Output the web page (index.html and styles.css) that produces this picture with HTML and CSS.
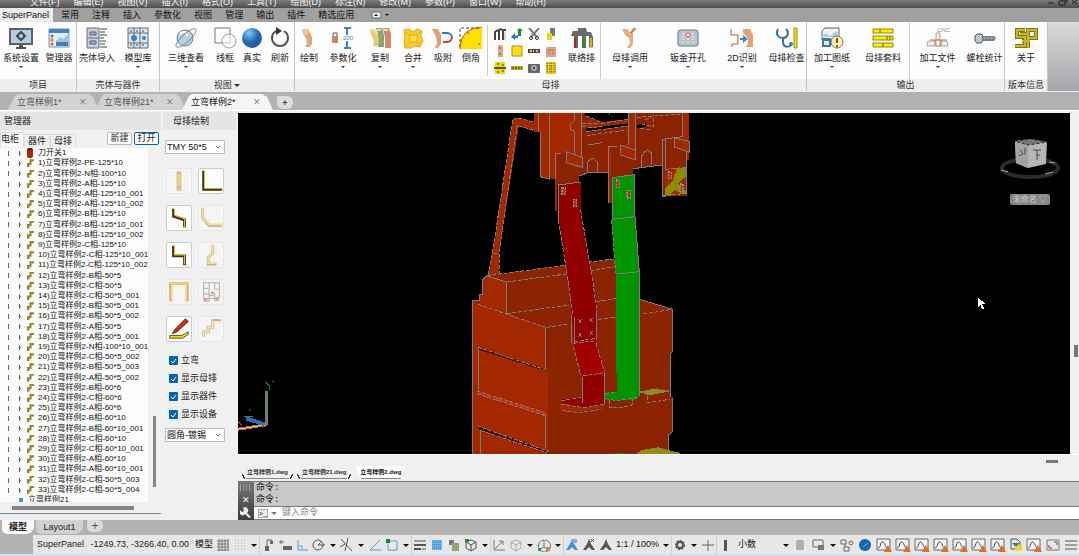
FILE: index.html
```html
<!DOCTYPE html>
<html lang="zh-CN">
<head>
  <meta charset="UTF-8">
  <meta name="viewport" content="width=device-width, initial-scale=1.0">
  <title>SuperPanel - 立弯样例2</title>
  <link rel="stylesheet" href="styles.css">
</head>
<body>
  <!-- shared icons -->
  <svg class="defs" aria-hidden="true">
    <symbol id="i-chart" viewBox="0 0 16 14">
      <path d="M1 1h13v11H1z" fill="#f4f4f4" stroke="#666" stroke-width="1"/>
      <path d="M2 10C5 10 4 4 6.500 4S9 9 11 10" fill="none" stroke="#444"/>
      <path d="M12 7l4 7H8z" fill="#e07020"/>
    </symbol>
    <symbol id="i-person" viewBox="0 0 14 14">
      <path d="M7 1l2 5 4 6h-3L7 9l-3 3H1l4-6z" fill="currentColor"/>
    </symbol>
    <symbol id="i-bar" viewBox="0 0 22 22">
      <path d="M4 2l6 0 2 4 2 4v7l-2 3H7l2-4-1-5-3-4z" fill="#e2a679"/>
      <path d="M4 2h6v5l-4 2z" fill="#edc29c"/>
    </symbol>
  </svg>

  <nav class="menubar">
    <div class="menu-items">
      <a href="#">文件(F)</a><a href="#">编辑(E)</a><a href="#">视图(V)</a><a href="#">插入(I)</a><a href="#">格式(O)</a><a href="#">工具(T)</a><a href="#">绘图(D)</a><a href="#">标注(N)</a><a href="#">修改(M)</a><a href="#">参数(P)</a><a href="#">窗口(W)</a><a href="#">帮助(H)</a>
    </div>
    <svg class="window-buttons" viewBox="0 0 32 8"><path d="M1 3h6M12 1h6v4h-6zM14 0h6v3M25 0l5 4M30 0l-5 4" fill="none" stroke="#222"/></svg>
  </nav>

  <nav class="ribbon-tabs">
    <a href="#" class="active">SuperPanel</a><a href="#">常用</a><a href="#">注释</a><a href="#">插入</a><a href="#">参数化</a><a href="#">视图</a><a href="#">管理</a><a href="#">输出</a><a href="#">插件</a><a href="#">精选应用</a>
    <svg class="ribbon-toggle" viewBox="0 0 20 8"><rect x="1" y="1" width="9" height="6" rx="1" fill="#eee" stroke="#666"/><path d="M3 5l2-2 2 2zM14 3h4l-2 2z" fill="#111"/></svg>
  </nav>

  <section class="ribbon">
    <div class="group">
      <div class="tools tools-project">
        <button class="tool"><svg viewBox="0 0 24 22"><path d="M1 2h22v15H1z" fill="#b9cde0" stroke="#5c6268" stroke-width="2"/><circle cx="12" cy="9" r="3" fill="none" stroke="#444b52" stroke-width="2"/><path d="M12 4v2M12 12v2M7 9h2M15 9h2" stroke="#444b52" stroke-width="2"/><path d="M10 18h4v2h3v2H7v-2h3z" fill="#555"/></svg>系统设置<i class="caret"></i></button>
        <button class="tool"><svg viewBox="0 0 22 22"><path d="M1 2h20v18H1z" fill="#e4eff8" stroke="#7198b8"/><path d="M1 2h20v4H1z" fill="#4a83b4"/><path d="M8 14l4-4 3 2 5-5v8H8z" fill="#9fc3e2"/><path d="M8 15h12v4H8z" fill="#3f80ba"/><circle cx="4" cy="9" r="1.500" fill="#3d7fb9"/><circle cx="4" cy="13" r="2" fill="#ee9b35"/><circle cx="4" cy="17" r="1.500" fill="#dc693c"/></svg>管理器</button>
      </div>
      <div class="caption">项目</div>
    </div>

    <div class="group">
      <div class="tools tools-parts">
        <button class="tool"><svg viewBox="0 0 22 22"><path d="M1 1h12v20H1z" fill="#c4d0dc" stroke="#69737e"/><path d="M1 11h12" stroke="#69737e"/><path d="M4 5h6v3H4zM4 14h6v3H4z" fill="#a2b1bf" stroke="#5c6570"/><path d="M14 2h7M14 5h5M14 8h7M14 11h4M14 14h6M14 17h5M14 20h7" stroke="#3d4e43" stroke-width="1"/></svg>壳体导入</button>
        <button class="tool"><svg viewBox="0 0 22 22"><path d="M1 1h20v20H1zM1 6h20M1 16h20M7 1v20M13 1v20" fill="#dbe6ef" stroke="#626b75"/><circle cx="7" cy="11" r="3" fill="#3983bf"/><circle cx="17" cy="11" r="2" fill="#3983bf"/><path d="M4 3v2M10 3v2M16 3v2M4 17v2M10 17v2M16 17v2" stroke="#3e4852"/></svg>模型库<i class="caret"></i></button>
      </div>
      <div class="caption">壳体与器件</div>
    </div>

    <div class="group">
      <div class="tools tools-view">
        <button class="tool"><svg viewBox="0 0 24 22"><circle cx="11" cy="11" r="8" fill="#bdd0e2" stroke="#77848f"/><path d="M6 7c4-4 7-2 7 2" stroke="#fff" stroke-width="2" fill="none"/><ellipse cx="12" cy="11" rx="13" ry="4" transform="rotate(-42 12 11)" fill="none" stroke="#8a9299" stroke-width="1"/></svg>三维查看<i class="caret"></i></button>
        <button class="tool"><svg viewBox="0 0 24 22"><path d="M2 1h15v15H2z" fill="none" stroke="#777" stroke-width="1"/><circle cx="16" cy="14" r="7" fill="#fff" fill-opacity=".6" stroke="#999" stroke-width="1"/></svg>线框</button>
        <button class="tool"><svg viewBox="0 0 22 22"><defs><radialGradient id="ball" cx=".35" cy=".25"><stop offset="0" stop-color="#8bc5f1"/><stop offset=".7" stop-color="#367fc8"/><stop offset="1" stop-color="#25629f"/></radialGradient></defs><circle cx="11" cy="11" r="10" fill="url(#ball)"/></svg>真实</button>
        <button class="tool"><svg viewBox="0 0 22 22"><path d="M7 4a8 8 0 1 0 8 0" fill="none" stroke="#505050" stroke-width="2"/><path d="M7 0l6 4-6 4z" fill="#333"/></svg>刷新</button>
      </div>
      <div class="caption">视图 <i class="caret big"></i></div>
    </div>

    <div class="group">
      <div class="tools tools-busbar">
        <button class="tool"><svg viewBox="0 0 22 22"><use href="#i-bar"/></svg>绘制</button>
        <button class="tool"><svg viewBox="0 0 22 22"><path d="M0 9h6v7H0z" fill="#c68a62"/><path d="M1 9V6h4v3" fill="none" stroke="#555" stroke-width="1"/><path d="M12 1h7M12 21h7M15 1v20" stroke="#3a83c4" stroke-width="2"/><path d="M10 8h12v6H10z" fill="#fff"/><text x="11" y="13" class="icon-text">200</text></svg>参数化<i class="caret"></i></button>
        <button class="tool"><svg viewBox="0 0 22 22"><path d="M0 2h6l4 8v9H4l1-5z" fill="#e9c877"/><path d="M7 1h6l2 7v12H9l1-8z" fill="#87a474"/><path d="M14 1h6l2 6v14h-6V11z" fill="#d9866f"/><path d="M1 3l5 0 2 4M8 3l4 0M15 3l4 0" stroke="#f2e0bd" stroke-width="2" fill="none"/></svg>复制<i class="caret"></i></button>
        <button class="tool"><svg viewBox="0 0 22 22"><path d="M2 3l5-1 4 3 4-3 5 2-1 5 2 5-3 6-5-1-4 2-6 0-1-6 1-5z" fill="#f7d01d" stroke="#dfa04d"/><path d="M8 8h7v7H8zM4 5l4 3M18 5l-3 3M4 18l4-3M18 18l-3-3" fill="#ffe346" stroke="#e9a737"/></svg>合并<i class="caret"></i></button>
        <button class="tool"><svg viewBox="0 0 22 22"><path d="M0 2h6l3 6v9l-3 4H3l2-5-1-6z" fill="#dfa277"/><path d="M10 6h5a5 5 0 0 1 5 5" fill="none" stroke="#2f77b8" stroke-width="2"/><path d="M20 10a5 5 0 0 1-5 5h-4" fill="none" stroke="#d53e2e" stroke-width="2"/></svg>吸附</button>
        <button class="tool"><svg viewBox="0 0 22 22"><path d="M0 22C0 8 8 1 22 0v22z" fill="#ffdf00"/><path d="M0 20V1h21" fill="none" stroke="#444" stroke-dasharray="3 2"/><path d="M0 22C0 8 8 1 22 0M7 4l2 3M19 16v2" fill="none" stroke="#c63e2b"/></svg>倒角</button>
        <div class="mini-grid">
          <button aria-label="母排组"><svg viewBox="0 0 12 12"><path d="M1 12V4l3-2M5 12V2l3-1M9 12V2h3" fill="none" stroke="#444" stroke-width="2"/><path d="M11 4v8" stroke="#cdbd68"/></svg></button>
          <button aria-label="旋转"><svg viewBox="0 0 12 12"><path d="M0 9l4-4v3l3-1v3l-3 0v2z" fill="#2376bd"/><path d="M6 2l3-2 3 3-2 0v5H7V3z" fill="#179532"/></svg></button>
          <button aria-label="剪切"><svg viewBox="0 0 12 12"><path d="M1 0l8 9M11 0L3 9" stroke="#777" stroke-width="2"/><circle cx="3" cy="10" r="1.500" fill="none" stroke="#333"/><circle cx="9" cy="10" r="1.500" fill="none" stroke="#333"/></svg></button>
          <button aria-label="拼接"><svg viewBox="0 0 12 12"><path d="M5 0h5v8H5z" fill="#777"/><path d="M2 5h5v7H2z" fill="#e8d714"/></svg></button>
          <button aria-label="打孔"><svg viewBox="0 0 12 12"><path d="M4 0h5v12H4z" fill="#e3aa80"/><path d="M5 3h2M5 9h2" stroke="#744" stroke-width="1"/></svg></button>
          <button aria-label="铜板"><svg viewBox="0 0 12 12"><path d="M1 1h10v10H1z" fill="#ffdd13" stroke="#a69012"/></svg></button>
          <button aria-label="连接"><svg viewBox="0 0 12 12"><path d="M0 4h12v4H0z" fill="#494949"/><path d="M2 5h2v2H2zM8 5h2v2H8zM5 5h1v2H5z" fill="#ffc72e"/></svg></button>
          <button aria-label="折弯"><svg viewBox="0 0 12 12"><path d="M2 2h9v10H1V4z" fill="#dba180"/><path d="M3 5h6M3 8h2M7 8h2" stroke="#b56f50"/></svg></button>
          <button aria-label="四孔"><svg viewBox="0 0 12 12"><path d="M1 0h10v5H1zM1 7h10v5H1z" fill="#f2d800"/><path d="M0 6h12" stroke="#555" stroke-width="2"/><path d="M3 2h2M8 3h2M3 10h2M8 9h2" stroke="#333"/></svg></button>
          <button aria-label="直排"><svg viewBox="0 0 12 12"><path d="M0 4h12v4H0z" fill="#bba617"/><path d="M1 6h10" stroke="#443d0b" stroke-dasharray="2 1"/></svg></button>
          <button aria-label="测量"><svg viewBox="0 0 12 12"><rect y="2" width="12" height="9" rx="1" fill="#666"/><circle cx="6" cy="6" r="3" fill="#aaa"/><circle cx="6" cy="6" r="1" fill="#222"/></svg></button>
          <button aria-label="孔阵"><svg viewBox="0 0 12 12"><path d="M1 0h10v12H1z" fill="#e7d221"/><path d="M2 1h8M2 4h8M2 7h8M2 10h8M2 1v10M6 1v10M10 1v10" stroke="#706400" stroke-dasharray="1 1"/></svg></button>
        </div>
        <button class="tool"><svg viewBox="0 0 22 22"><path d="M7 1h8l1 4 4 0 2 5v10h-4V9h-3v12h-4V9H7v12H3V9H0l2-5h5z" fill="#696969"/><path d="M4 11v10" stroke="#b32520" stroke-width="2"/><path d="M12 11v10" stroke="#1c902d" stroke-width="2"/><path d="M20 11v10" stroke="#d1b420" stroke-width="2"/></svg>联络排</button>
        <button class="tool"><svg viewBox="0 0 22 22"><path d="M3 2l5 0 3 3 3-4 4 0-4 5 0 11-3 4H8l3-5-1-5-4-3z" fill="#e6ad83"/><path d="M12 6l4-5" stroke="#975b33" fill="none"/></svg>母排调用<i class="caret"></i></button>
        <button class="tool"><svg viewBox="0 0 22 22"><rect x="1" y="3" width="20" height="16" rx="2" fill="#bbc6d0" stroke="#69747d"/><path d="M5 8h2M15 8h2M5 14h2M10 14h2M15 14h2" stroke="#fff" stroke-width="3"/><path d="M5 8h2M15 8h2M5 14h2M10 14h2M15 14h2" stroke="#7c8790"/><circle cx="11" cy="8" r="2" fill="#f5d6d0" stroke="#df604d" stroke-width="1"/></svg>钣金开孔<i class="caret"></i></button>
        <button class="tool"><svg viewBox="0 0 24 22"><path d="M1 2v6h7v9H2v3" fill="none" stroke="#d0502f" stroke-width="1"/><path d="M13 2h7l3 6v12h-7l2-4v-5l-5-5z" fill="#e0a374"/><path d="M10 12h5" stroke="#398acd" stroke-width="2"/><path d="M13 8l5 4-5 4z" fill="#398acd"/></svg>2D识别<i class="caret"></i></button>
        <button class="tool"><svg viewBox="0 0 22 22"><path d="M2 2c-3 6 1 9 5 9s7-5 3-9M7 11v4c0 7 9 5 9 1" fill="none" stroke="#346fa8" stroke-width="2"/><path d="M18 1h3v20h-3z" fill="#f0de20" stroke="#9b8c28"/><circle cx="15" cy="17" r="2" fill="#4181be"/></svg>母排检查</button>
      </div>
      <div class="caption">母排</div>
    </div>

    <div class="group">
      <div class="tools tools-output">
        <button class="tool"><svg viewBox="0 0 22 22"><path d="M4 1h14v12H1V4z" fill="#eef4f8" stroke="#59636b"/><path d="M1 9l4-3 4 3 6-5 3 3v3H1z" fill="#b3cede"/><path d="M1 11h9v9H1z" fill="#347bb7"/><path d="M3 14h5v4H3z" fill="#e4f0fa"/><circle cx="16" cy="15" r="6" fill="#ffefb2" stroke="#746d58"/><path d="M16 11v5M16 18v2" stroke="#7b5b12" stroke-width="2"/></svg>加工图纸<i class="caret"></i></button>
        <button class="tool"><svg viewBox="0 0 22 22"><path d="M1 2h20v4H1zM1 9h20v4H1zM1 16h20v4H1z" fill="#ffec00" stroke="#91851b"/><path d="M8 2v4M15 9v4M18 9v4M11 16v4" stroke="#81601b"/></svg>母排套料</button>
        <button class="tool split"><svg viewBox="0 0 24 22"><path d="M10 6h4v7h-4zM2 14h8v5H1zM14 14h7l1 5h-8z" fill="#eee" stroke="#aaa"/><path d="M4 13h17M10 19h5M9 13v6M15 13v6" stroke="#cb7349" stroke-width="1"/><text x="11" y="5" class="icon-text grey">CNC</text></svg>加工文件<i class="caret"></i></button>
        <button class="tool"><svg viewBox="0 0 22 22"><path d="M3 7h4l2 2v5l-2 2H3l-2-2V9z" fill="#bfc6cb" stroke="#4d5357"/><path d="M8 9h12l2 2-2 3H8z" fill="#777f84"/><path d="M10 11h10" stroke="#c2c8cc" stroke-dasharray="2 1"/></svg>螺栓统计</button>
      </div>
      <div class="caption">输出</div>
    </div>

    <div class="group">
      <div class="tools tools-about">
        <button class="tool"><svg viewBox="0 0 24 22"><path d="M11 3H3v7h8v9H1M14 21V3h8v8h-8M6 7h8M8 14h8" fill="none" stroke="#82710d" stroke-width="4"/><path d="M11 3H3v7h8v9H1M14 21V3h8v8h-8M6 7h8M8 14h8" fill="none" stroke="#cbb72a" stroke-width="2"/></svg>关于</button>
      </div>
      <div class="caption">版本信息</div>
    </div>
  </section>

  <nav class="doc-tabs">
    <a href="#">立弯样例1*<span>✕</span></a>
    <a href="#">立弯样例21*<span>✕</span></a>
    <a href="#" class="active">立弯样例2*<span>✕</span></a>
    <button class="add" aria-label="新建图形">+</button>
  </nav>

  <main class="workspace">
    <aside class="manager">
      <h2>管理器</h2>
      <div class="manager-tabs">
        <a href="#" class="active">电柜</a><a href="#">器件</a><a href="#">母排</a>
        <button>新建</button><button class="primary">打开</button>
      </div>
      <div class="tree-box">
        <ul class="tree">
          <li class="switch">刀开关1</li>
          <li>1)立弯样例2-PE-125*10</li>
          <li>2)立弯样例2-N相-100*10</li>
          <li>3)立弯样例2-A相-125*10</li>
          <li>4)立弯样例2-A相-125*10_001</li>
          <li>5)立弯样例2-A相-125*10_002</li>
          <li>6)立弯样例2-B相-125*10</li>
          <li>7)立弯样例2-B相-125*10_001</li>
          <li>8)立弯样例2-B相-125*10_002</li>
          <li>9)立弯样例2-C相-125*10</li>
          <li>10)立弯样例2-C相-125*10_001</li>
          <li>11)立弯样例2-C相-125*10_002</li>
          <li>12)立弯样例2-B相-50*5</li>
          <li>13)立弯样例2-C相-50*5</li>
          <li>14)立弯样例2-C相-50*5_001</li>
          <li>15)立弯样例2-B相-50*5_001</li>
          <li>16)立弯样例2-B相-50*5_002</li>
          <li>17)立弯样例2-A相-50*5</li>
          <li>18)立弯样例2-A相-50*5_001</li>
          <li>19)立弯样例2-N相-100*10_001</li>
          <li>20)立弯样例2-C相-50*5_002</li>
          <li>21)立弯样例2-B相-50*5_003</li>
          <li>22)立弯样例2-A相-50*5_002</li>
          <li>23)立弯样例2-B相-60*6</li>
          <li>24)立弯样例2-C相-60*6</li>
          <li>25)立弯样例2-A相-60*6</li>
          <li>26)立弯样例2-B相-60*10</li>
          <li>27)立弯样例2-B相-60*10_001</li>
          <li>28)立弯样例2-C相-60*10</li>
          <li>29)立弯样例2-C相-60*10_001</li>
          <li>30)立弯样例2-A相-60*10</li>
          <li>31)立弯样例2-A相-60*10_001</li>
          <li>32)立弯样例2-C相-50*5_003</li>
          <li>33)立弯样例2-C相-50*5_004</li>
          <li class="project">立弯样例21</li>
        </ul>
        <div class="v-scroll"><i></i></div>
      </div>
      <div class="h-scroll"><i></i></div>
    </aside>

    <aside class="drawing">
      <h2>母排绘制</h2>
      <div class="drawing-body">
        <select aria-label="母排规格"><option>TMY 50*5</option></select>
        <div class="shapes">
          <button aria-label="直排"><svg viewBox="0 0 26 26"><path d="M11 3h4v20h-4z" fill="#f3d27a" stroke="#d5b67a"/><path d="M12 5h2M12 20h2" stroke="#999"/></svg></button>
          <button class="on" aria-label="L形"><svg viewBox="0 0 26 26"><path d="M5 2v20h20" fill="none" stroke="#4a2c1c" stroke-width="3"/><path d="M6 2v19h19" fill="none" stroke="#eadb1a"/></svg></button>
          <button class="on" aria-label="斜Z形"><svg viewBox="0 0 26 26"><path d="M7 3v8l12 4v8" fill="none" stroke="#4a2c1c" stroke-width="3"/><path d="M8 3v7l11 4v9" fill="none" stroke="#eadb1a"/></svg></button>
          <button aria-label="斜角"><svg viewBox="0 0 26 26"><path d="M4 2v11l7 8h14" fill="none" stroke="#aaa68e" stroke-width="3"/><path d="M4 2v11l7 7h14" fill="none" stroke="#f8de8d" stroke-width="2"/></svg></button>
          <button class="on" aria-label="Z形"><svg viewBox="0 0 26 26"><path d="M7 3v11h12v10" fill="none" stroke="#4a2c1c" stroke-width="3"/><path d="M8 3v10h11v10" fill="none" stroke="#eadb1a"/></svg></button>
          <button aria-label="弯折"><svg viewBox="0 0 26 26"><path d="M15 2v9l-5 5v7h9" fill="none" stroke="#aaa68e" stroke-width="3"/><path d="M15 2v9l-5 5v6h9" fill="none" stroke="#f8de8d" stroke-width="2"/></svg></button>
          <button aria-label="U形"><svg viewBox="0 0 26 26"><path d="M4 23V4h18v19" fill="none" stroke="#c9aa65" stroke-width="3"/><path d="M5 23V4h16v19" fill="none" stroke="#f8d477" stroke-width="2"/></svg></button>
          <button aria-label="组合"><svg viewBox="0 0 26 26"><path d="M5 3h17v17H5zM5 9h6V3M11 9v8h6M17 3v7h5M5 15h6v8H5M17 14v8h5" fill="none" stroke="#aaa"/><path d="M13 14h3M5 21h4M18 20h3" fill="none" stroke="#e6997c" stroke-width="3"/></svg></button>
          <button class="on" aria-label="手绘"><svg viewBox="0 0 26 26"><path d="M8 14L20 2l3 3-12 11-5 2z" fill="#cd2d18" stroke="#54211a"/><path d="M3 20h13l7-4v3l-6 4H3z" fill="#ebdb1d" stroke="#564b1b"/></svg></button>
          <button aria-label="阶梯"><svg viewBox="0 0 26 26"><path d="M5 21v-5h5v-5h5V4h9" fill="none" stroke="#aaa68e" stroke-width="3"/><path d="M5 21v-5h5v-5h5V5h9" fill="none" stroke="#f6e1a7" stroke-width="2"/></svg></button>
        </div>
        <div class="checks">
          <label><input type="checkbox" checked>立弯</label>
          <label><input type="checkbox" checked>显示母排</label>
          <label><input type="checkbox" checked>显示器件</label>
          <label><input type="checkbox" checked>显示设备</label>
        </div>
        <select aria-label="转角类型"><option>圆角-镀锡</option></select>
      </div>
    </aside>

    <section class="editor">
      <div class="viewport-row">
        <div class="viewport">
          <svg class="scene" viewBox="-636 9 2496 1023" preserveAspectRatio="xMinYMin slice" shape-rendering="crispEdges">
            <!-- connecting rod -->
            <path d="M188 28L205 24 252 36 270 66 206 50 147 430V492L115 497 128 425z" fill="#a32800"/>
            <path class="edge dash" d="M188 30L128 425 115 495M202 44L147 430V490M188 28L205 24 250 36M206 48L268 66M128 430h20"/>

            <!-- cabinet -->
            <path d="M68 1032V572H88V553H97V510L110 497 497 446 568 568 668 598V720L661 730V862H668V965L656 975V1032z" fill="#8c2300"/>
            <path d="M68 572L88 580 287 652V775L294 785V1032H68zM88 553H97V510L110 497 169 516V612L88 583z" fill="#a32800"/>
            <path d="M84 712L288 778 286 783 88 720zM80 947L298 1023V1030L90 962z" fill="#431406"/>
            <path d="M80 843L292 910V920L80 851z" fill="#c92e0c"/>
            <path class="edge" d="M68 1032V572H88V553H97V510L110 497 169 516V612M86 714V845M287 652V780M287 915V1014M92 960V1032M568 568L668 598V725L661 730V862M668 865V965L656 975V1032"/>
            <path class="edge dash" d="M110 497L497 446M170 516L348 492M420 482L497 470M84 583L287 652M170 611L357 585M440 575L497 565M290 652L352 642M445 628L497 622M580 612L668 598M84 712L288 780M80 843L292 910M80 851L290 918M80 947L298 1025M92 962L290 1028"/>

            <!-- switch assembly -->
            <path d="M252 9H717V150H710V258H638V165L578 172 550 176V198L485 204V280H475V185L412 189 387 198V218L322 225V303H316V208L271 200V66H252z" fill="#8c2300"/>
            <path d="M252 9H373V125L316 130V208L271 200V66H252zM373 9H396V140L348 125V158L396 172V140H373zM535 9H558V148L511 133V105H535zM697 9H717V150H710V124L674 112V84H697zM316 130H322V303H316zM475 108H484V280H475z" fill="#a32800"/>
            <path d="M406 9H535V28L460 36 438 28 406 19zM408 56L535 40V48L408 63zM560 45L587 40V50L560 56z" fill="#000"/>
            <path d="M396 35L420 30 448 37 535 27V38L455 46 440 53 396 50z" fill="#a32800"/>
            <path class="edge" d="M265 9V66M271 66V200L300 208M298 9V208M316 208V130H332M373 9V32L361 45V57L373 64V135M394 9V140M535 9V105M555 9V148M697 9V80L637 88V258H645V85M475 280V108H500M348 125L396 142V172L348 158zM511 105V134L555 149V120zM674 84V112L717 126V94zM412 189V158Q428 134 442 158V189M575 172V138Q588 112 604 128V166M387 198L412 189 475 186M550 176L636 165M710 126V250M415 105L455 98"/>
            <path class="edge dash" d="M408 18L440 30 455 40 535 27M396 50L440 54 458 47M408 65L535 48M410 77L530 60M396 40H440M560 22L695 12M585 30L610 18V50L575 42M570 55L600 60"/>
            <path d="M645 178L708 172V250L645 256z" fill="#8e8c00"/>
            <path d="M645 178L680 178 667 214 645 235zM708 200L683 220 708 245zM660 252L675 240 697 250z" fill="#a32800"/>
            <path class="edge dash" d="M645 178L708 172V250L638 258"/>
            <path class="bolt" d="M655 186h9v20h-9zM690 222h9v22h-9z"/>
            <path d="M477 10h4v4h-4zM484 17h3v3h-3z" fill="#0b8d0b"/>

            <!-- phase A bar -->
            <path d="M325 225L392 216V300L428 510 440 580V690L372 700 365 612 354 510 325 330z" fill="#900000"/>
            <path d="M370 700L438 690 463 785 398 800z" fill="#a50000"/>
            <path d="M398 798L463 788V882L398 893 332 878 335 868 398 861z" fill="#900000"/>
            <path d="M330 880L400 894 463 882V892L365 908 330 900z" fill="#a32800"/>
            <path class="edge" d="M325 330V225L392 216M365 615V700M373 620V698M440 600V690M397 800V880M463 788V882"/>
            <path class="edge dash" d="M325 330L354 510 368 615M392 300L428 510 440 600M370 700L438 692M372 695L440 685M370 710L392 795M438 700L463 785M398 798L463 788M332 872L398 862M332 882L398 893 463 882M335 902L390 908 455 898"/>
            <path class="bolt" d="M336 234h10v18h-10zM370 268h10v22h-10z"/>
            <path class="edge" d="M386 628l8 12M394 628l-8 12M420 624l8 12M428 624l-8 12M386 668l8 12M394 668l-8 12M420 664l8 12M428 664l-8 12"/>

            <!-- phase B bar -->
            <path d="M485 203L553 192 555 320 568 485V858L555 870 500 872 466 866V850L500 846 497 490 485 330z" fill="#009500"/>
            <path class="edge" d="M487 330V203L553 194V320L487 328M500 492L568 485V858M555 320L568 485"/>
            <path class="edge dash" d="M485 330L497 490M466 850L500 846M466 866L500 872 568 860M478 870V892L520 892 548 884V868M592 858V878L660 868"/>
            <path class="bolt" d="M499 210h9v22h-9zM531 242h10v22h-10z"/>

            <!-- terminals -->
            <path d="M568 846L615 836 656 843 600 855zM562 1032L575 1020 625 1012 690 1030V1032z" fill="#929000"/>
            <path class="edge dash" d="M568 846L615 836 656 843 600 855zM562 1028L625 1014 690 1030M605 842L640 846M615 1018L640 1024"/>
            <path d="M495 1028h30v4h-30z" fill="#009500"/>

            <!-- UCS icon -->
            <path d="M-638 958L-550 944" stroke="#c46c4b" stroke-width="9"/>
            <path d="M-638 958L-550 944" stroke="#efb49a" stroke-width="3"/>
            <path d="M-551 843V945" stroke="#6f8169" stroke-width="8"/>
            <path d="M-612 925L-556 943" stroke="#286eb8" stroke-width="12"/>
            <path d="M-617 918L-590 918M-604 904L-598 898" stroke="#3179ba" stroke-width="3"/>
            <path d="M-554 814L-543 827V840M-533 814h4" fill="none" stroke="#128518" stroke-width="3"/>
            <path d="M-636 935L-624 946" stroke="#b5301b" stroke-width="3"/>

            <path d="M1584 562V592L1591 585 1597 598 1603 595 1597 583H1607z" fill="#fff"/>
          </svg>
          <div class="viewcube">
            <svg viewBox="0 0 64 48">
              <ellipse cx="32" cy="32" rx="28" ry="9" fill="none" stroke="#30282f" stroke-width="4"/>
              <path d="M17 5L32 3 49 6 48 28 30 32 18 27z" fill="#b5b5b5"/>
              <path d="M17 5L30 9V32L18 27z" fill="#a2a4a2"/>
              <path d="M17 5L33 3 49 6 30 9z" fill="#777" stroke="#252525" stroke-dasharray="3 2"/>
              <path d="M22 14l3 4-4 2M27 12v7M35 14h8M39 14v10M39 18l3 2" fill="none" stroke="#435047" stroke-width="1"/>
              <path d="M3 34l7 2M47 38l8-2M51 26l6 1" stroke="#aaa" stroke-width="1"/>
            </svg>
            <button>未命名 ▽</button>
          </div>
        </div>
        <div class="v-track"><i></i></div>
      </div>
      <div class="h-track"><i></i></div>
      <nav class="dwg-tabs">
        <a href="#">立弯样例1.dwg</a><a href="#">立弯样例21.dwg</a><a href="#" class="active">立弯样例2.dwg</a>
      </nav>
      <div class="command">
        <div class="command-side">
          <i class="grip"></i>
          <button aria-label="关闭">✕</button>
          <button class="wrench" aria-label="自定义"><svg viewBox="0 0 12 12"><path d="M3 1l1 3-2 1-2-2a3 3 0 0 0 5 4l4 4 2-1-4-4a3 3 0 0 0-4-5z" fill="#eee"/></svg></button>
        </div>
        <div class="command-main">
          <p>命令:</p>
          <p>命令:</p>
          <label class="command-input"><span class="prompt">&gt;_</span><i class="caret big"></i><input type="text" placeholder="键入命令" aria-label="命令行"></label>
        </div>
      </div>
    </section>
  </main>

  <nav class="layout-tabs">
    <a href="#" class="active">模型</a><a href="#">Layout1</a><button aria-label="新建布局">+</button>
  </nav>

  <footer class="statusbar">
    <span class="status-name">SuperPanel</span>
    <span class="coords">-1249.73, -3266.40, 0.00</span>
    <button class="text">模型</button>
    <button><svg viewBox="0 0 14 14"><path d="M3 1v12M6 1v12M9 1v12M12 1v12M1 3h12M1 6h12M1 9h12M1 12h12" stroke="#777"/></svg></button>
    <button><svg viewBox="0 0 14 14"><path d="M2 2h11M2 5h11M2 8h11M2 11h11" stroke="#aaa" stroke-dasharray="1 2"/></svg></button>
    <button class="drop" aria-label="捕捉选项"><i class="caret big"></i></button>
    <button class="sep"><svg viewBox="0 0 14 14"><path d="M6 9V2h5v4" fill="none" stroke="#666"/><path d="M9 3h3v3H9zM4 8h4v5H4z" fill="#666"/></svg></button>
    <button><svg viewBox="0 0 14 14"><path d="M1 4h5M3 2v4" stroke="#666"/><path d="M5 8h9v4H5z" fill="#666"/></svg></button>
    <button><svg viewBox="0 0 14 14"><path d="M3 2v10h10M3 8h4v4" fill="none" stroke="#58a1df" stroke-width="1"/></svg></button>
    <button><svg viewBox="0 0 14 14"><circle cx="6" cy="7" r="5" fill="none" stroke="#555"/><path d="M6 7h7M6 7l4-4" stroke="#555"/></svg></button>
    <button class="drop" aria-label="极轴选项"><i class="caret big"></i></button>
    <button><svg viewBox="0 0 14 14"><path d="M1 1l11 12M8 0L5 13M0 9l5-3" stroke="#555"/></svg></button>
    <button class="drop" aria-label="等轴测选项"><i class="caret big"></i></button>
    <button><svg viewBox="0 0 14 14"><path d="M12 2L2 12h11" fill="none" stroke="#4d9de1" stroke-width="1"/></svg></button>
    <button><svg viewBox="0 0 14 14"><path d="M3 3h9v9H3z" fill="none" stroke="#4d9de1" stroke-width="1"/><path d="M1 1h4v4H1z" fill="#138a23"/></svg></button>
    <button class="drop" aria-label="对象捕捉选项"><i class="caret big"></i></button>
    <button class="sep"><svg viewBox="0 0 14 14"><path d="M1 3h12" stroke="#555"/><path d="M1 7h12M1 11h7" stroke="#555" stroke-width="2"/><path d="M9 11h4" stroke="#555"/></svg></button>
    <button><svg viewBox="0 0 14 14"><path d="M2 2h10v10H2z" fill="#78b8ef"/><path d="M2 4h10M2 7h10M2 10h10M4 2v10M7 2v10M10 2v10" stroke="#3486ce" stroke-dasharray="1 1"/></svg></button>
    <button><svg viewBox="0 0 14 14"><path d="M2 2h5v5H2z" fill="#777"/><path d="M5 5h7v8H5z" fill="#8fa877"/></svg></button>
    <button><svg viewBox="0 0 14 14"><path d="M7 2l5 2v6l-5 3-5-3V4zM2 4l5 3 5-3M7 7v6" fill="none" stroke="#555"/><path d="M1 1h4v3H1z" fill="#188e2c"/></svg></button>
    <button class="drop" aria-label="三维捕捉选项"><i class="caret big"></i></button>
    <button class="sep"><svg viewBox="0 0 14 14"><path d="M2 2v10h11M3 11l8-8M7 3h4v4" fill="none" stroke="#777"/></svg></button>
    <button><svg viewBox="0 0 14 14"><path d="M7 2l5 2v6l-5 3-5-3V4zM2 4l5 3 5-3M7 7v6" fill="none" stroke="#aaa"/></svg></button>
    <button class="drop" aria-label="过滤选项"><i class="caret big"></i></button>
    <button><svg viewBox="0 0 14 14"><path d="M7 2a6 6 0 1 0 1 0M7 2v7l-5 3M7 9l5 3" fill="none" stroke="#57789a"/><path d="M9 9h4v4H9z" fill="#e0803e"/><path d="M1 10h3v3H1z" fill="#31943f"/></svg></button>
    <button class="drop" aria-label="小控件选项"><i class="caret big"></i></button>
    <button class="blue sep"><svg viewBox="0 0 14 14"><use href="#i-person"/><path d="M7 1h5v4H7z" fill="#77b4ec"/></svg></button>
    <button><svg viewBox="0 0 14 14"><use href="#i-person"/><path d="M9 1l3 3M12 1L9 4" stroke="#555"/></svg></button>
    <button><svg viewBox="0 0 14 14"><use href="#i-person"/></svg></button>
    <button class="text">1:1 / 100%</button>
    <button class="drop" aria-label="比例"><i class="caret big"></i></button>
    <button class="sep"><svg viewBox="0 0 14 14"><circle cx="7" cy="7" r="3" fill="none" stroke="#555" stroke-width="2"/><circle cx="7" cy="7" r="4" fill="none" stroke="#555" stroke-width="2" stroke-dasharray="2 1"/></svg></button>
    <button class="drop" aria-label="工作空间"><i class="caret big"></i></button>
    <button><svg viewBox="0 0 14 14"><path d="M7 2v11M1 7h12" stroke="#666" stroke-width="1"/></svg></button>
    <button class="sep"><svg viewBox="0 0 14 14"><path d="M6 2h3v11H6z" fill="#555"/></svg></button>
    <button class="text units">小数</button>
    <div class="status-right">
      <button class="drop" aria-label="单位"><i class="caret big"></i></button>
      <button><svg viewBox="0 0 14 14"><path d="M4 3h6v8H4zM5 5h4M5 7h4M5 9h4" fill="none" stroke="#777"/></svg></button>
      <button class="wide"><svg viewBox="0 0 14 14"><path d="M2 2h10v7H2z" fill="none" stroke="#666"/><path d="M7 7h6v5H7z" fill="#777"/></svg></button>
      <button class="drop" aria-label="锁定"><i class="caret big"></i></button>
      <button><svg viewBox="0 0 14 14"><path d="M1 2h5v4H1zM4 9h5v4H4zM5 6v3" fill="none" stroke="#666"/><circle cx="11" cy="5" r="2" fill="none" stroke="#666"/></svg></button>
      <button class="wide"><svg viewBox="0 0 14 14"><circle cx="7" cy="7" r="6" fill="#1264b7"/><path d="M5 9l5-4" stroke="#70aee6"/></svg></button>
      <button class="wide"><svg viewBox="0 0 16 14"><use href="#i-chart"/></svg></button>
      <button class="wide"><svg viewBox="0 0 16 14"><use href="#i-chart"/></svg></button>
      <button class="wide"><svg viewBox="0 0 16 14"><use href="#i-chart"/></svg></button>
      <button class="wide"><svg viewBox="0 0 16 14"><use href="#i-chart"/></svg></button>
      <button class="wide"><svg viewBox="0 0 16 14"><use href="#i-chart"/></svg></button>
      <button class="wide"><svg viewBox="0 0 16 14"><use href="#i-chart"/></svg></button>
      <button class="wide"><svg viewBox="0 0 16 14"><use href="#i-chart"/></svg></button>
      <button><svg viewBox="0 0 14 14"><path d="M2 1h6l3 3v7H2z" fill="#e7e7e7" stroke="#555"/><path d="M3 5h8l-4 4z" fill="#2878b8"/><path d="M5 9l8-3v6l-6 1z" fill="#f0d42c"/></svg></button>
      <button class="wide"><svg viewBox="0 0 16 14"><use href="#i-chart"/></svg></button>
      <button class="wide"><svg viewBox="0 0 14 14"><path d="M1 2h12v10H1z" fill="none" stroke="#777"/><path d="M8 4h3v3M6 10H3V7" fill="none" stroke="#555" stroke-width="1"/></svg></button>
      <button><svg viewBox="0 0 14 14"><path d="M1 3h12M1 7h12M1 11h12" stroke="#555" stroke-width="1"/></svg></button>
    </div>
  </footer>
</body>
</html>
```
FILE: styles.css
```css
* { box-sizing: border-box; }
body { margin: 0; height: 100vh; display: flex; flex-direction: column; overflow: hidden; background: #d5dde8; color: #222; font: 9px/12px "Liberation Sans", "Noto Sans CJK SC", sans-serif; }
a { color: inherit; text-decoration: none; white-space: nowrap; }
button { margin: 0; padding: 0; border: 0; background: none; color: inherit; font: inherit; white-space: nowrap; }
svg { display: block; }
ul, p, h2 { margin: 0; padding: 0; font-weight: normal; font-size: 9px; }
.defs { display: none; }
.caret { display: inline-block; border: 2px solid transparent; border-top-color: #333; border-bottom: 0; }
.caret.big { border-width: 3px 3px 0; vertical-align: middle; }
.icon-text { font-size: 6px; fill: #3a83c4; }
.icon-text.grey { fill: #888; }

/* menu and ribbon tabs */
.menubar { flex: none; height: 8px; overflow: hidden; display: flex; align-items: flex-end; justify-content: space-between; background: linear-gradient(#7c7c7c, #4c4c4c); color: #f2f2f2; }
.menu-items { display: flex; gap: 14px; padding-left: 30px; }
.window-buttons { width: 32px; height: 8px; }
.ribbon-tabs { flex: none; height: 14px; display: flex; align-items: center; gap: 13px; background: #a0a0a0; color: #111; line-height: 14px; }
.ribbon-tabs .active { background: #ececec; padding: 0 4px 0 2px; margin-right: -5px; }
.ribbon-toggle { width: 20px; height: 8px; margin-left: 4px; }

/* ribbon */
.ribbon { flex: none; height: 70px; display: flex; background: linear-gradient(#dadada, #a5a6aa); border-bottom: 1px solid #eee; }
.group { display: flex; flex-direction: column; background: #fdfdfd; border-right: 1px solid #c4c4c4; }
.tools { flex: 1; display: grid; }
.tools-project { grid-template-columns: 42px 34px; }
.tools-parts { grid-template-columns: 40px 42px; }
.tools-view { grid-template-columns: 52px 26px 28px 28px; }
.tools-busbar { grid-template-columns: 28px 40px 34px 32px 28px 28px 78px 38px 58px 58px 50px 39px; }
.tools-output { grid-template-columns: 50px 52px 56px 39px; }
.tools-about { grid-template-columns: 42px; }
.tool { display: flex; flex-direction: column; align-items: center; padding-top: 5px; min-width: 0; }
.tool svg { width: 24px; height: 22px; margin-bottom: 3px; flex: none; }
.tool .caret { margin-top: 2px; }
.caption { height: 12px; background: #efefef; text-align: center; color: #333; }
.mini-grid { display: grid; grid-template-columns: repeat(4, 17px); grid-auto-rows: 17px; justify-content: center; align-content: start; margin: 3px 0 3px 2px; border-left: 1px solid #ccc; }
.mini-grid svg { width: 12px; height: 12px; margin: auto; }
.mini-grid + .tool { border-right: 1px solid #ccc; }
.tools-output .split { border-left: 1px solid #ccc; }

/* open drawings */
.doc-tabs { flex: none; height: 18px; display: flex; align-items: flex-end; padding-left: 8px; background: #b2b2b2; }
.doc-tabs a { width: 91px; height: 16px; padding: 0 12px 0 9px; margin-right: -4px; line-height: 17px; display: flex; justify-content: space-between; background: #d2d2d2; color: #555; clip-path: polygon(7px 2px, 10px 0, 80px 0, 85px 3px, 100% 100%, 0 100%); }
.doc-tabs .active { background: #f6f6f6; color: #111; }
.doc-tabs span { color: #888; }
.doc-tabs .add { width: 16px; height: 13px; margin: 0 0 1px 8px; background: #ddd; border-radius: 2px 6px 6px 6px; font-weight: bold; color: #444; }

/* workspace */
.workspace { flex: 1; min-height: 0; display: grid; grid-template-columns: 161px 73px minmax(0, 1fr); column-gap: 2px; background: #f0f0f0; border-top: 1px solid #fff; }
h2 { flex: none; height: 18px; margin-top: 1px; line-height: 18px; background: #e5e5e5; padding-left: 4px; }
.drawing h2 { padding-left: 10px; }
.manager, .drawing { display: flex; flex-direction: column; min-height: 0; }
.manager { margin-bottom: 6px; border-bottom: 1px solid #7c8794; }
.manager-tabs { flex: none; height: 18px; display: flex; align-items: flex-end; padding-bottom: 1px; }
.manager-tabs a { width: 26px; height: 13px; text-align: center; border: 1px solid #ddd; border-bottom: 0; }
.manager-tabs .active { width: 24px; height: 15px; background: #fcfcfc; padding-right: 6px; }
.manager-tabs button { width: 25px; height: 13px; line-height: 11px; margin: 0 0 2px 2px; border: 1px solid #bbb; border-radius: 2px; background: #fff; }
.manager-tabs a + button { margin-left: auto; }
.manager-tabs .primary { border-color: #0066b4; margin-right: 2px; }
.tree-box { flex: 1; min-height: 0; overflow: hidden; display: flex; }
.tree { flex: 1; height: calc(100% + 3px); list-style: none; display: flex; flex-direction: column; background: #fcfcfc; font-size: 8px; line-height: 10px; color: #111; }
.tree li { flex: 1 1 0; min-height: 0; display: flex; align-items: center; padding-left: 19px; white-space: nowrap; background: linear-gradient(#666, #666) 8px 3px / 1px 5px no-repeat, linear-gradient(#666, #666) 19px 3px / 1px 5px no-repeat, linear-gradient(#777, #777) 20px 5px / 1px 1px no-repeat; }
.tree li::before { content: ""; flex: none; width: 7px; height: 8px; margin: 0 4px 0 8px; background: #9b842d; clip-path: polygon(0 100%, 0 45%, 35% 45%, 35% 0, 100% 0, 100% 28%, 65% 28%, 65% 70%, 35% 70%, 35% 100%); }
.tree .switch::before { background: #b52308; width: 6px; margin-right: 5px; clip-path: none; border-radius: 2px; border-top: 2px solid #4a1c14; }
.tree .project { background: none; padding-left: 7px; }
.tree .project::before { background: #4a94c4; width: 4px; height: 5px; margin: 0 5px 0 12px; clip-path: none; }
.v-scroll { flex: none; width: 14px; display: flex; flex-direction: column; justify-content: flex-end; align-items: center; padding: 0 2px 15px 0; }
.v-scroll i { width: 3px; height: 21%; background: #858585; }
.h-scroll { flex: none; height: 11px; padding: 4px 27px 0 12px; }
.h-scroll i { display: block; height: 4px; background: #858585; }

.drawing-body { padding: 10px 10px 0 2px; display: flex; flex-direction: column; align-items: stretch; }
select { width: 60px; height: 14px; padding: 0 10px 0 1px; border: 1px solid #bbb; border-radius: 1px; font: inherit; line-height: 12px; color: #111; appearance: none; background: #fff url("data:image/svg+xml,%3Csvg xmlns='http://www.w3.org/2000/svg' width='6' height='4'%3E%3Cpath d='M1 1l2 2 2-2' fill='none' stroke='%23666'/%3E%3C/svg%3E") right 3px center no-repeat; }
.shapes { display: grid; grid-template-columns: 26px 26px; column-gap: 6px; row-gap: 11px; margin: 14px 0 9px 1px; }
.shapes button { height: 26px; border: 1px solid #e6e6e6; border-radius: 2px; background: #f5f5f5; }
.shapes .on { background: #fdfdfd; border-color: #ccc; }
.shapes svg { width: 24px; height: 24px; }
.checks { display: flex; flex-direction: column; margin: 0 0 5px 4px; }
.checks label { height: 18px; display: flex; align-items: center; gap: 3px; white-space: nowrap; }
input[type="checkbox"] { appearance: none; flex: none; width: 9px; height: 9px; margin: 0; border-radius: 1px; background: #0065b8 url("data:image/svg+xml,%3Csvg xmlns='http://www.w3.org/2000/svg' width='9' height='9'%3E%3Cpath d='M2 5l2 2 3-4' fill='none' stroke='%23fff'/%3E%3C/svg%3E"); }

/* drawing area */
.editor { display: flex; flex-direction: column; min-width: 0; padding-top: 2px; }
.viewport-row { flex: 1; min-height: 0; display: flex; }
.viewport { flex: 1; min-width: 0; position: relative; overflow: hidden; background: #000; }
.scene { width: 100%; height: 100%; }
.edge { fill: none; stroke: #7c7c7c; stroke-width: 3; }
.dash { stroke-dasharray: 12 5; }
.bolt { fill: #a83410; stroke: #8d8d8d; stroke-width: 4; stroke-dasharray: 6 3; }
.viewcube { position: absolute; top: 23px; right: 8px; width: 64px; display: flex; flex-direction: column; align-items: center; }
.viewcube svg { width: 64px; height: 48px; }
.viewcube button { margin-top: 10px; width: 40px; height: 11px; border-radius: 2px; background: #858789; color: #d0d0d0; font-size: 8px; line-height: 11px; }
.v-track { flex: none; width: 9px; display: flex; align-items: center; justify-content: flex-end; padding: 135px 1px 0 0; }
.v-track i { width: 4px; height: 12px; background: #777; }
.h-track { flex: none; height: 12px; padding: 5px 21px 0 0; border-top: 1px solid #fff; }
.h-track i { display: block; width: 12px; height: 3px; margin-left: auto; background: #777; }
.dwg-tabs { flex: none; height: 15px; display: flex; align-items: flex-start; gap: 4px; padding-left: 4px; font-size: 6px; line-height: 13px; font-weight: bold; }
.dwg-tabs a { height: 13px; padding: 0 5px; color: #333; background: linear-gradient(#888, #888) center bottom / calc(100% - 8px) 1px no-repeat, linear-gradient(62deg, transparent 2px, #333 2px 3px, transparent 3px) left / 7px 100% no-repeat, linear-gradient(-62deg, transparent 2px, #333 2px 3px, transparent 3px) right / 7px 100% no-repeat; }
.dwg-tabs .active { background-color: #fff; color: #111; clip-path: polygon(0 0, 100% 0, calc(100% - 6px) 100%, 6px 100%); }
.command { flex: none; height: 39px; display: flex; border-top: 1px solid #777; }
.command-side { width: 16px; display: flex; flex-direction: column; background: linear-gradient(#777, #3c3c3c); color: #fff; }
.command-side button { flex: 1; }
.grip { height: 7px; margin: 2px; background: repeating-linear-gradient(90deg, #999 0 1px, transparent 1px 3px); }
.wrench svg { width: 12px; height: 12px; margin: auto; }
.command-main { flex: 1; min-width: 0; background: #c7c9c9; font-family: "Liberation Mono", "Noto Sans CJK SC", monospace; color: #111; display: flex; flex-direction: column; }
.command-main p { line-height: 12px; padding-left: 2px; }
.command-input { flex: 1; display: flex; align-items: center; gap: 3px; padding-left: 4px; background: #fff; border-top: 1px solid #777; border-bottom: 1px solid #777; }
.prompt { height: 9px; width: 10px; border: 1px solid #aaa; background: #eee; font-size: 7px; line-height: 8px; }
.command-input .caret { border-top-color: #777; }
.command-input input { flex: 1; min-width: 0; height: 12px; padding: 0 2px; border: 0; background: none; font: inherit; outline: none; }
.command-input input::placeholder { color: #888; opacity: 1; }

/* layout tabs and status bar */
.layout-tabs { flex: none; height: 15px; display: flex; padding-left: 2px; background: #b2b2b2; line-height: 14px; }
.layout-tabs a { width: 47px; height: 14px; margin-right: 4px; text-align: center; background: #d1d1d1; border-radius: 0 0 8px 5px; }
.layout-tabs .active { width: 32px; background: #fafafa; font-weight: bold; margin-right: 2px; }
.layout-tabs button { width: 16px; height: 12px; background: #dcdcdc; border-radius: 2px 5px 6px 5px; color: #555; font-size: 12px; line-height: 12px; }
.statusbar { flex: none; height: 19px; display: flex; align-items: stretch; margin-bottom: 2px; background: #e7e7e7; border-left: 33px solid #b2b2b2; line-height: 19px; white-space: nowrap; }
.status-name { width: 53px; padding-left: 4px; border-right: 1px solid #ddd; }
.coords { width: 107px; padding-right: 3px; text-align: right; border-right: 1px solid #ddd; }
.statusbar button { width: 17px; flex: none; }
.statusbar button svg { width: 14px; height: 14px; margin: auto; color: #555; }
.statusbar .text { width: auto; padding: 0 1px 0 2px; color: #111; }
.statusbar .units { padding-left: 5px; }
.statusbar .drop { width: 11px; line-height: 12px; }
.statusbar .drop .caret { border-top-color: #111; }
.statusbar .sep { border-left: 1px solid #d0d0d0; }
.statusbar .wide { width: 19px; }
.statusbar .wide svg { width: 16px; }
.statusbar .blue svg { color: #3a8ee0; }
.status-right { margin-left: auto; display: flex; }
```
